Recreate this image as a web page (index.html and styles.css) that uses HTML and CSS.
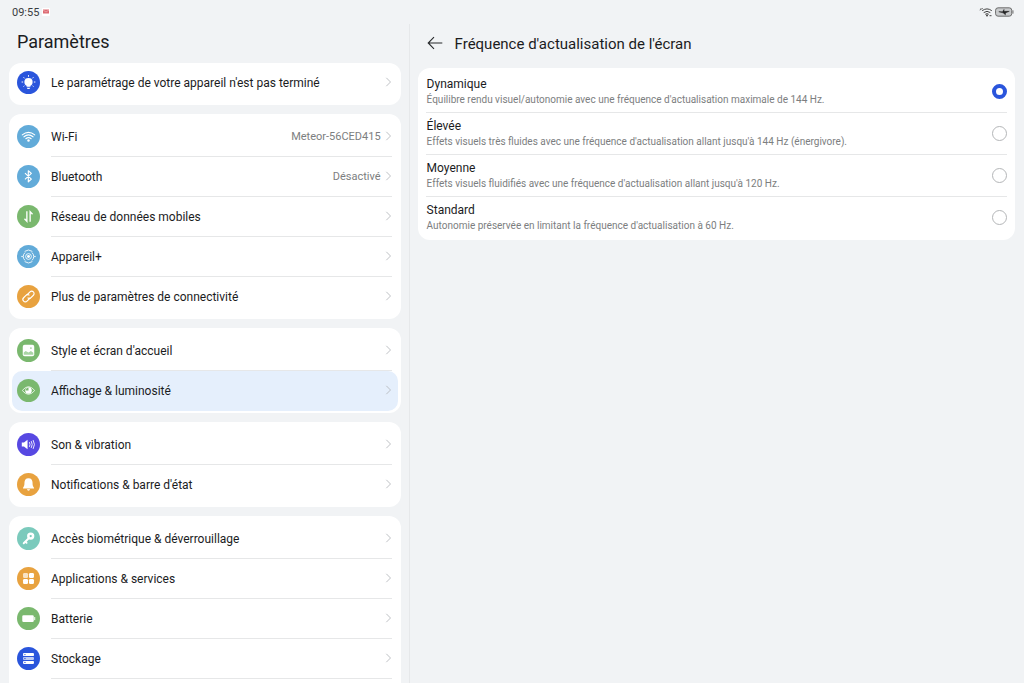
FILE: index.html
```
<!DOCTYPE html>
<html lang="fr">
<head>
<meta charset="utf-8">
<meta name="viewport" content="width=device-width, initial-scale=1">
<title>Paramètres</title>
<link rel="stylesheet" href="styles.css">
</head>
<body>
<svg class="defs" aria-hidden="true">
  <symbol id="chevron" viewBox="0 0 8 12"><path d="M1.5 1.2 6.3 6 1.5 10.8" fill="none" stroke="currentColor" stroke-width="1"/></symbol>
</svg>
<div class="screen">
  <header class="status">
    <div class="status-side">
      <span>09:55</span>
      <svg class="mail" viewBox="0 0 8 8"><rect width="8" height="8" rx="1" fill="#fff"/><path d="M1 1.500h6v4H1z" fill="#dc6a72"/><path d="m1 2 3 2 3-2" fill="none" stroke="#f3c0c4" stroke-width=".6"/></svg>
    </div>
    <div class="status-side status-right">
      <svg class="signal" viewBox="0 0 14 10"><g fill="none" stroke="#444" stroke-width="1"><path d="M3.200 3.700q4.800-3.600 9.600 0M4.700 5.600q3.300-2.600 6.600 0M6.300 7.300q1.700-1.300 3.400 0"/><path d="M1 3.300 2 1.300M2.700 2.500l.8-1.500" stroke-width=".8"/></g><circle cx="8" cy="8.600" r="1" fill="#444"/><path d="M10.500 8.700h2" stroke="#444"/></svg>
      <svg class="power" viewBox="0 0 20 10"><rect x=".6" y=".6" width="17" height="8.800" rx="2.600" fill="#c9cbcd" stroke="#666" stroke-width="1"/><path d="M18.900 3.300v3.400" stroke="#666" stroke-width="1"/><path d="M4 4.700h4l1.500-2.400v2H15L11 6v2L8.500 5.900z" fill="#222" stroke="#222" stroke-width=".5"/></svg>
    </div>
  </header>

  <nav class="sidebar">
    <h1>Paramètres</h1>
    <div class="card card-single">
      <a class="row" href="#"><svg class="icon royal" viewBox="0 0 24 24"><circle cx="12" cy="11.500" r="4.300" fill="#fff"/><path d="M10 14h4v2.500h-4zM10.200 17.500h3.600l-.8 1.200h-2z" fill="#fff"/><path d="M12 4.300v1.700M6.800 6.500l1.200 1.200M17.200 6.500 16 7.700M4.800 11.500h1.600M17.600 11.500h1.600M6.800 16.300l1-1M17.200 16.300l-1-1" stroke="#fff"/></svg><span class="label">Le paramétrage de votre appareil n'est pas terminé</span><svg class="chev"><use href="#chevron"/></svg></a>
    </div>
    <div class="card">
      <a class="row" href="#"><svg class="icon sky" viewBox="0 0 24 24"><g fill="none" stroke="#fff" stroke-width="1.200" stroke-linecap="round"><path d="M5.500 10.300q6.500-5.200 13 0M7.300 12.300q4.700-3.800 9.400 0M9.200 14.300q2.800-2.200 5.600 0"/></g><circle cx="12" cy="16.200" r="1.300" fill="#fff"/></svg><span class="label">Wi-Fi</span><span class="value">Meteor-56CED415</span><svg class="chev"><use href="#chevron"/></svg></a>
      <a class="row" href="#"><svg class="icon sky" viewBox="0 0 24 24"><path d="m8.300 8.500 6.700 6.300-3.200 2.700V6l3.200 2.800-6.700 6.200" fill="none" stroke="#fff" stroke-width="1.200" stroke-linejoin="round"/></svg><span class="label">Bluetooth</span><span class="value">Désactivé</span><svg class="chev"><use href="#chevron"/></svg></a>
      <a class="row" href="#"><svg class="icon green" viewBox="0 0 24 24"><path d="M10.300 6.500V17L7.800 14.400M13.700 17.500V7l2.500 2.600" fill="none" stroke="#fff" stroke-width="1.400"/></svg><span class="label">Réseau de données mobiles</span><svg class="chev"><use href="#chevron"/></svg></a>
      <a class="row" href="#"><svg class="icon sky" viewBox="0 0 24 24"><g fill="none" stroke="#fff" stroke-width=".9"><circle cx="12" cy="12" r="3"/><path d="M8.500 16.200a5.500 5.500 0 0 1 0-8.400M15.500 7.800a5.500 5.500 0 0 1 0 8.400M8 6.700a6.700 6.700 0 0 1 8 0M8 17.300a6.700 6.700 0 0 0 8 0"/></g><circle cx="12" cy="12" r="1.500" fill="#fff"/><circle cx="5.300" cy="12" r=".8" fill="#fff"/><circle cx="18.700" cy="12" r=".8" fill="#fff"/></svg><span class="label">Appareil+</span><svg class="chev"><use href="#chevron"/></svg></a>
      <a class="row" href="#"><svg class="icon orange" viewBox="0 0 24 24"><g fill="none" stroke="#fff" stroke-width="1.200" transform="rotate(-45 12 12)"><path d="M12.500 14.300H7.500a2.500 2.500 0 0 1 0-5H11a2.500 2.500 0 0 1 2.500 2.500"/><path d="M11.500 9.700h5a2.500 2.500 0 0 1 0 5H13a2.500 2.500 0 0 1-2.500-2.500"/></g></svg><span class="label">Plus de paramètres de connectivité</span><svg class="chev"><use href="#chevron"/></svg></a>
    </div>
    <div class="card">
      <a class="row" href="#"><svg class="icon green" viewBox="0 0 24 24"><rect x="6" y="6" width="12" height="12" rx="2" fill="#fff"/><path d="M7 16.500v-2.500l2-1.600 3 1.600 2.500-1.400 2.500 1.700v2.200z" fill="#a9d5a4"/><circle cx="14.500" cy="9.500" r="1" fill="#a9d5a4"/></svg><span class="label">Style et écran d'accueil</span><svg class="chev"><use href="#chevron"/></svg></a>
      <a class="row selected" href="#" aria-current="page"><svg class="icon green" viewBox="0 0 24 24"><path d="M5.500 12q6.500-8 13 0-6.500 8-13 0z" fill="none" stroke="#e5f3e3" stroke-width="1"/><circle cx="12" cy="12" r="3.400" fill="#fff"/><path d="M12 12V9a3 3 0 0 0-3 3z" fill="#7ab86e"/></svg><span class="label">Affichage &amp; luminosité</span><svg class="chev"><use href="#chevron"/></svg></a>
    </div>
    <div class="card">
      <a class="row" href="#"><svg class="icon violet" viewBox="0 0 24 24"><path d="M5 9.800h2.300L11 7v10l-3.700-2.800H5z" fill="#fff"/><path d="M12.900 9.500q1.400 2.500 0 5M14.800 8.400q2.100 3.600 0 7.200M16.800 7.400q2.800 4.600 0 9.200" fill="none" stroke="#fff" stroke-width=".9"/></svg><span class="label">Son &amp; vibration</span><svg class="chev"><use href="#chevron"/></svg></a>
      <a class="row" href="#"><svg class="icon orange" viewBox="0 0 24 24"><path d="M12 5.500c-3 0-4.200 2.200-4.200 4.500 0 3.200-.5 4.300-1.500 5.400v.9h11.400v-.9c-1-1.100-1.500-2.200-1.500-5.400 0-2.300-1.200-4.500-4.200-4.500zM10.300 17h3.400q-.4 1.500-1.700 1.500T10.300 17z" fill="#fff"/></svg><span class="label">Notifications &amp; barre d'état</span><svg class="chev"><use href="#chevron"/></svg></a>
    </div>
    <div class="card">
      <a class="row" href="#"><svg class="icon teal" viewBox="0 0 24 24"><circle cx="14.300" cy="9.500" r="2.500" fill="none" stroke="#fff" stroke-width="2.600"/><path d="m12 12-5 5M8.800 15.300l1.200 1.200" stroke="#fff" stroke-width="2" stroke-linecap="round"/></svg><span class="label">Accès biométrique &amp; déverrouillage</span><svg class="chev"><use href="#chevron"/></svg></a>
      <a class="row" href="#"><svg class="icon orange" viewBox="0 0 24 24"><g fill="#fff"><rect x="6.300" y="6.300" width="5.200" height="5.200" rx="1.300" opacity=".7"/><rect x="12.500" y="6.300" width="5.200" height="5.200" rx="1.300"/><rect x="6.300" y="12.500" width="5.200" height="5.200" rx="1.300"/><rect x="12.500" y="12.500" width="5.200" height="5.200" rx="1.300"/></g></svg><span class="label">Applications &amp; services</span><svg class="chev"><use href="#chevron"/></svg></a>
      <a class="row" href="#"><svg class="icon green" viewBox="0 0 24 24"><rect x="5.500" y="8.500" width="12" height="7.200" rx="1.300" fill="#fff"/><path d="M18.500 10.500v3.200" stroke="#fff" stroke-width="1"/></svg><span class="label">Batterie</span><svg class="chev"><use href="#chevron"/></svg></a>
      <a class="row" href="#"><svg class="icon royal" viewBox="0 0 24 24"><g fill="#fff"><rect x="6.300" y="6.300" width="11.400" height="3.200" rx="1"/><rect x="6.300" y="10.400" width="11.400" height="3.200" rx="1" opacity=".7"/><rect x="6.300" y="14.500" width="11.400" height="3.200" rx="1"/></g><g fill="#2a55dc"><circle cx="8.300" cy="7.900" r=".7"/><circle cx="8.300" cy="12" r=".7"/><circle cx="8.300" cy="16.100" r=".7"/></g></svg><span class="label">Stockage</span><svg class="chev"><use href="#chevron"/></svg></a>
      <div class="row" aria-hidden="true"></div>
    </div>
  </nav>

  <main class="detail">
    <div class="title-bar">
      <button class="back" type="button" aria-label="Retour"><svg viewBox="0 0 16 14"><path d="M15.300 7H1.500M7 1.200 1.200 7 7 12.800" fill="none" stroke="#26282b" stroke-width="1.100"/></svg></button>
      <h2>Fréquence d'actualisation de l'écran</h2>
    </div>
    <form class="options">
      <label class="option"><span class="text"><span class="name">Dynamique</span><span class="desc">Équilibre rendu visuel/autonomie avec une fréquence d'actualisation maximale de 144 Hz.</span></span><input type="radio" name="rate" checked></label>
      <label class="option"><span class="text"><span class="name">Élevée</span><span class="desc">Effets visuels très fluides avec une fréquence d'actualisation allant jusqu'à 144 Hz (énergivore).</span></span><input type="radio" name="rate"></label>
      <label class="option"><span class="text"><span class="name">Moyenne</span><span class="desc">Effets visuels fluidifiés avec une fréquence d'actualisation allant jusqu'à 120 Hz.</span></span><input type="radio" name="rate"></label>
      <label class="option"><span class="text"><span class="name">Standard</span><span class="desc">Autonomie préservée en limitant la fréquence d'actualisation à 60 Hz.</span></span><input type="radio" name="rate"></label>
    </form>
  </main>
</div>
</body>
</html>
```
FILE: styles.css
```
* { box-sizing: border-box; }
body {
  margin: 0;
  background: #f1f3f5;
  color: #1b1c1e;
  font-family: Roboto, "Noto Sans", sans-serif;
  font-size: 12px;
}
.defs { display: none; }
.screen {
  display: grid;
  grid-template-columns: 2fr 3fr;
  grid-template-rows: 24px 1fr;
  height: 100vh;
  overflow: hidden;
}
.status {
  grid-column: 1 / -1;
  display: flex;
  justify-content: space-between;
  align-items: center;
  padding: 0 10px 0 12px;
  font-size: 11px;
  color: #3a3c3f;
}
.status-side { display: flex; align-items: center; gap: 3px; }
.status-right { gap: 2px; }
.mail { width: 8px; height: 8px; }
.signal { width: 14px; height: 10px; }
.power { width: 19px; height: 10px; }

.sidebar {
  display: flex;
  flex-direction: column;
  gap: 9px;
  padding: 0 8px 0 9px;
  border-right: 1px solid #e6e8ea;
  overflow: hidden;
}
h1, h2 { margin: 0; font-weight: 400; }
h1 { padding: 6px 8px 0; font-size: 18px; line-height: 24px; }
.card {
  flex: none;
  padding: 3px 3px 2px;
  border-radius: 12px;
  background: #fff;
}
.card-single { padding: 0 3px 2px; }
.row {
  position: relative;
  display: flex;
  align-items: center;
  height: 40px;
  padding: 0 6px 2px 5px;
  border-radius: 10px;
  color: inherit;
  text-decoration: none;
}
.row:not(:last-child)::after {
  content: "";
  position: absolute;
  left: 39px;
  right: 6px;
  bottom: 0;
  height: 1px;
  background: #e6e7e8;
}
.selected { background: #e5effc; }
.icon {
  flex: none;
  width: 23px;
  height: 23px;
  margin-right: 11px;
  border-radius: 50%;
}
.royal { background: #2a55dc; }
.sky { background: #62abd9; }
.green { background: #7ab86e; }
.orange { background: #e8a23f; }
.violet { background: #5748e2; }
.teal { background: #7bcabc; }
.label, .value { padding-top: 2px; line-height: 16px; }
.label { flex: 1; white-space: nowrap; }
.value { margin-right: 4px; font-size: 11px; color: #7c7e80; }
.chev { flex: none; width: 7px; height: 12px; color: #b5b8bb; }

.detail { min-width: 0; padding: 0 9px 0 8px; }
.title-bar { display: flex; align-items: center; gap: 12px; height: 38px; padding-left: 9px; }
.back { width: 16px; height: 16px; padding: 0; border: 0; background: none; }
.back svg { display: block; width: 16px; height: 14px; }
h2 { padding-top: 2px; font-size: 15px; line-height: 20px; }
.options {
  margin-top: 6px;
  padding: 3px 8px 2px;
  border-radius: 12px;
  background: #fff;
}
.option {
  display: flex;
  justify-content: space-between;
  align-items: center;
  height: 42px;
  border-bottom: 1px solid #e6e7e8;
}
.option:last-child { height: 41px; border-bottom: 0; }
.text { display: flex; flex-direction: column; padding: 1px 0 0 1px; }
.name { line-height: 16px; }
.desc { font-size: 10px; line-height: 16px; color: #7c7e80; }
input {
  appearance: none;
  flex: none;
  width: 15px;
  height: 15px;
  margin: 0;
  border: 1px solid #b4b6b8;
  border-radius: 50%;
  background: #fff;
}
input:checked { border: 4px solid #2a55dc; }
```
